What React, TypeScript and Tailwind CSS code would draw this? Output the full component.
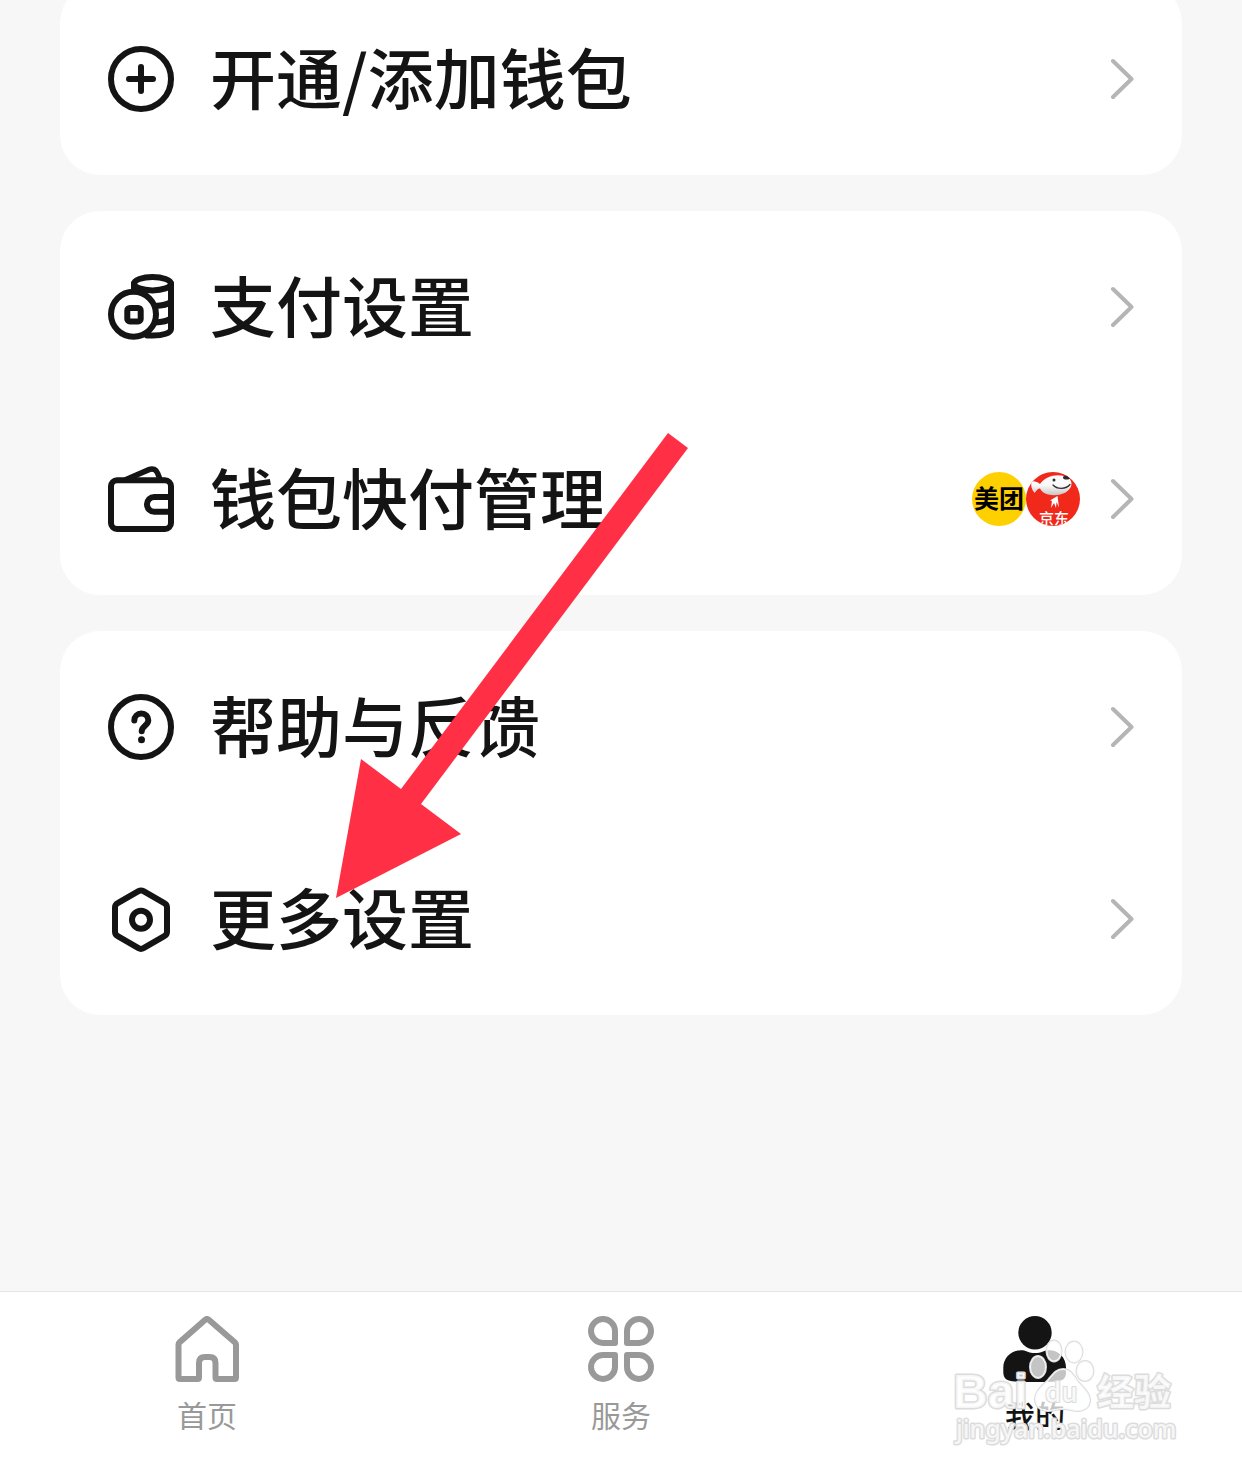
import React from "react";

const ICON_PROPS = {
  viewBox: "0 0 66 66",
  fill: "none",
  stroke: "currentColor",
  strokeWidth: 6,
  strokeLinecap: "round",
  strokeLinejoin: "round",
  "aria-hidden": true,
  className: "size-[66px] shrink-0",
} as const;

function PlusIcon() {
  return (
    <svg {...ICON_PROPS}>
      <circle cx="33" cy="33" r="30" />
      <path d="M33 21v24M21 33h24" />
    </svg>
  );
}

function CoinsIcon() {
  return (
    <svg {...ICON_PROPS}>
      <ellipse cx="44.5" cy="9.7" rx="18.5" ry="6.7" />
      <path d="M26 10v8M63 10v45c0 4-8 6.500-18 6.500h-6" />
      <path d="M47 32c7-.3 13-1.800 16-4M47 48.500c7-.3 13-1.800 16-4" />
      <circle cx="25.500" cy="40.300" r="22.500" fill="white" />
      <rect x="19.300" y="34" width="13.400" height="13.400" rx="2.500" />
    </svg>
  );
}

function WalletIcon() {
  return (
    <svg {...ICON_PROPS}>
      <rect x="3" y="14.300" width="60" height="48.700" rx="6" />
      <path d="M18 13.500 41 3.600c4-1.700 7 0 8.500 3.400l2.800 7" strokeWidth="5.500" />
      <path d="M62 31H46.300a7.300 7.300 0 0 0 0 14.700H62" />
    </svg>
  );
}

function HelpIcon() {
  return (
    <svg {...ICON_PROPS}>
      <circle cx="33" cy="33" r="30" />
      <path d="M26.300 26.500c0-4 3-7 7-7s7 3 7 6.800c0 5.200-6.600 5.700-6.600 11" />
      <circle cx="33.500" cy="45.700" r="3.500" fill="currentColor" stroke="none" />
    </svg>
  );
}

function HexagonIcon() {
  return (
    <svg {...ICON_PROPS}>
      <path d="M30.500 5.200a5 5 0 0 1 5 0l20.800 12a5 5 0 0 1 2.700 4.400v24.200a5 5 0 0 1-2.700 4.400l-20.800 12a5 5 0 0 1-5 0l-20.800-12A5 5 0 0 1 7 45.800V21.600a5 5 0 0 1 2.700-4.400z" />
      <circle cx="33" cy="33.700" r="9" />
    </svg>
  );
}

function HomeIcon() {
  return (
    <svg {...ICON_PROPS}>
      <path d="M4.500 28.500c0-1 .3-1.500 1-2.100L31.500 3.600c1-.8 2-.8 3 0l26.500 22.800c.7.600 1 1.100 1 2.100v33c0 1-.5 1.500-1.500 1.500H43c-1 0-1.500-.5-1.500-1.500V47c0-4-2-6-6-6H31c-4 0-6 2-6 6v14.500c0 1-.5 1.500-1.500 1.500H6c-1 0-1.500-.5-1.500-1.500z" />
    </svg>
  );
}

function ServiceIcon() {
  return (
    <svg {...ICON_PROPS}>
      <path d="M27 27H15A12 12 0 1 1 27 15z" />
      <path d="M39 27h12A12 12 0 1 0 39 15z" />
      <path d="M27 39H15A12 12 0 1 0 27 51z" />
      <path d="M39 39h12A12 12 0 1 1 39 51z" />
    </svg>
  );
}

function UserIcon() {
  return (
    <svg {...ICON_PROPS} fill="currentColor" stroke="none">
      <circle cx="33" cy="16.700" r="16.700" />
      <path d="M19 34.200c2.500 0 4 .5 6 1.300 5 2 11 2 16 0 2-.8 3.500-1.300 6-1.300 10 0 17 7.500 17 17.300v4.500c0 6-2.500 8.500-8 9.200-14 1.300-32 1.300-46 0-6-.7-8.700-3.200-8.700-9.200v-4.500C1.300 41.700 9 34.200 19 34.200z" />
    </svg>
  );
}

function Chevron() {
  return (
    <svg viewBox="0 0 24 42" fill="none" stroke="#b5b5b5" strokeWidth="4" strokeLinecap="round" strokeLinejoin="round" aria-hidden="true" className="h-[42px] w-6 shrink-0">
      <path d="M3 3 21.500 21 3 39" />
    </svg>
  );
}

function PayLogos() {
  return (
    <span className="mr-[30px] flex">
      <span className="flex size-[54px] items-center justify-center overflow-hidden rounded-full bg-[#ffd000] pb-1 text-[25px] leading-none font-bold whitespace-nowrap text-black">
        美团
      </span>
      <svg viewBox="0 0 54 54" className="size-[54px]">
        <defs>
          <clipPath id="jd-clip">
            <circle cx="27" cy="27" r="27" />
          </clipPath>
          <linearGradient id="jd-dog" x1="0" y1="0" x2="0" y2="1">
            <stop offset="0.5" stopColor="#fafafa" />
            <stop offset="1" stopColor="#c9c4c4" />
          </linearGradient>
        </defs>
        <g clipPath="url(#jd-clip)">
          <rect width="54" height="54" fill="#f0291a" />
          <path d="M14 12C19 5 29 1.500 38 4c7 2 9 7 6.500 11.500C41 22 31 24.500 22 22.500c-4-1-6.500-3-8-6-2 0-3.500 2-5.500 4.500C5.500 17.500 4.500 13 5.500 9.500c3-.5 6 .5 8.500 2.500z" fill="url(#jd-dog)" />
          <path d="M27 13c4 4.500 13 4.500 17-.5" fill="none" stroke="#3a3030" strokeWidth="1.300" strokeLinecap="round" />
          <ellipse cx="40.500" cy="5.500" rx="3.500" ry="2" fill="#30292a" />
          <circle cx="28" cy="8" r="1.500" fill="#30292a" />
          <path d="M24 28.500l7.500-4.500 1.500 11.500-2.500-5.500-.5 6-2-5-3 5 1-7z" fill="#fff" />
          <text x="28" y="52" textAnchor="middle" fill="#fff" className="text-[15px] font-medium">
            京东
          </text>
        </g>
      </svg>
    </span>
  );
}

const GROUPS = [
  [{ label: "开通/添加钱包", icon: <PlusIcon /> }],
  [
    { label: "支付设置", icon: <CoinsIcon /> },
    { label: "钱包快付管理", icon: <WalletIcon />, extra: <PayLogos /> },
  ],
  [
    { label: "帮助与反馈", icon: <HelpIcon /> },
    { label: "更多设置", icon: <HexagonIcon /> },
  ],
];

const TABS = [
  { label: "首页", icon: <HomeIcon />, active: false },
  { label: "服务", icon: <ServiceIcon />, active: false },
  { label: "我的", icon: <UserIcon />, active: true },
];

function Watermark() {
  return (
    <svg
      viewBox="0 0 240 116"
      className="pointer-events-none absolute right-[58px] bottom-[19px] h-[116px] w-[240px]"
      fill="#fff"
      fillOpacity="0.75"
      stroke="#dcdcdc"
      strokeWidth="3"
      strokeLinejoin="round"
      paintOrder="stroke"
    >
      <text x="9" y="70" className="font-['Liberation_Sans','Noto_Sans_CJK_SC',sans-serif] text-[48px] font-bold">
        Bai
      </text>
      <g strokeWidth="2">
        <ellipse cx="110" cy="13" rx="7.500" ry="10.500" />
        <ellipse cx="130" cy="14" rx="8.500" ry="10.500" />
        <ellipse cx="94" cy="29" rx="8" ry="11" />
        <ellipse cx="141" cy="33" rx="8.500" ry="10" />
        <path d="M119 31c7 0 10 5 14 11 5 7 13 12 13 20 0 7-5 11-12 11-6 0-9-2-15-2s-9 2-15 2c-8 0-13-5-13-12 0-8 7-13 13-19 5-6 8-11 15-11z" />
        <text x="101" y="64" className="text-[26px] font-medium">
          du
        </text>
      </g>
      <text x="153" y="68" className="text-[37px] font-bold">
        经验
      </text>
      <text x="12" y="100" className="font-['Noto_Sans',sans-serif] text-[25px] font-medium">
        jingyan.baidu.com
      </text>
    </svg>
  );
}

export default function App() {
  return (
    <div className="relative flex min-h-screen flex-col overflow-hidden bg-[#f7f7f7] font-['Noto_Sans_CJK_SC',sans-serif] text-[#141414]">
      <main className="-mt-[17px] flex flex-col gap-9 px-[60px] pb-9">
        {GROUPS.map((rows) => (
          <ul key={rows[0].label} className="rounded-[40px] bg-white">
            {rows.map((row) => (
              <li key={row.label}>
                <button type="button" className="flex h-48 w-full items-center px-12 text-left">
                  {row.icon}
                  <span className="ml-9 flex-1 pb-2 text-[66px] leading-none font-medium">{row.label}</span>
                  {row.extra}
                  <Chevron />
                </button>
              </li>
            ))}
          </ul>
        ))}
      </main>

      <nav className="mt-auto grid grid-cols-3 border-t border-[#e5e5e5] bg-white pt-6 pb-[41px]">
        {TABS.map((tab) => (
          <a
            key={tab.label}
            href="#"
            aria-current={tab.active ? "page" : undefined}
            className={`flex flex-col items-center gap-3.5 ${tab.active ? "font-medium text-[#141414]" : "text-[#999999]"}`}
          >
            {tab.icon}
            <span className="text-[30px] leading-9">{tab.label}</span>
          </a>
        ))}
      </nav>

      {/* Pointer to the settings row */}
      <svg viewBox="0 0 352 465" aria-hidden="true" className="pointer-events-none absolute top-[433px] left-[336px] h-[465px] w-[352px]">
        <path d="M332 0 352 15 85 371 125 401 0 465 25 326 65 356z" fill="#ff3045" />
      </svg>

      <Watermark />
    </div>
  );
}
